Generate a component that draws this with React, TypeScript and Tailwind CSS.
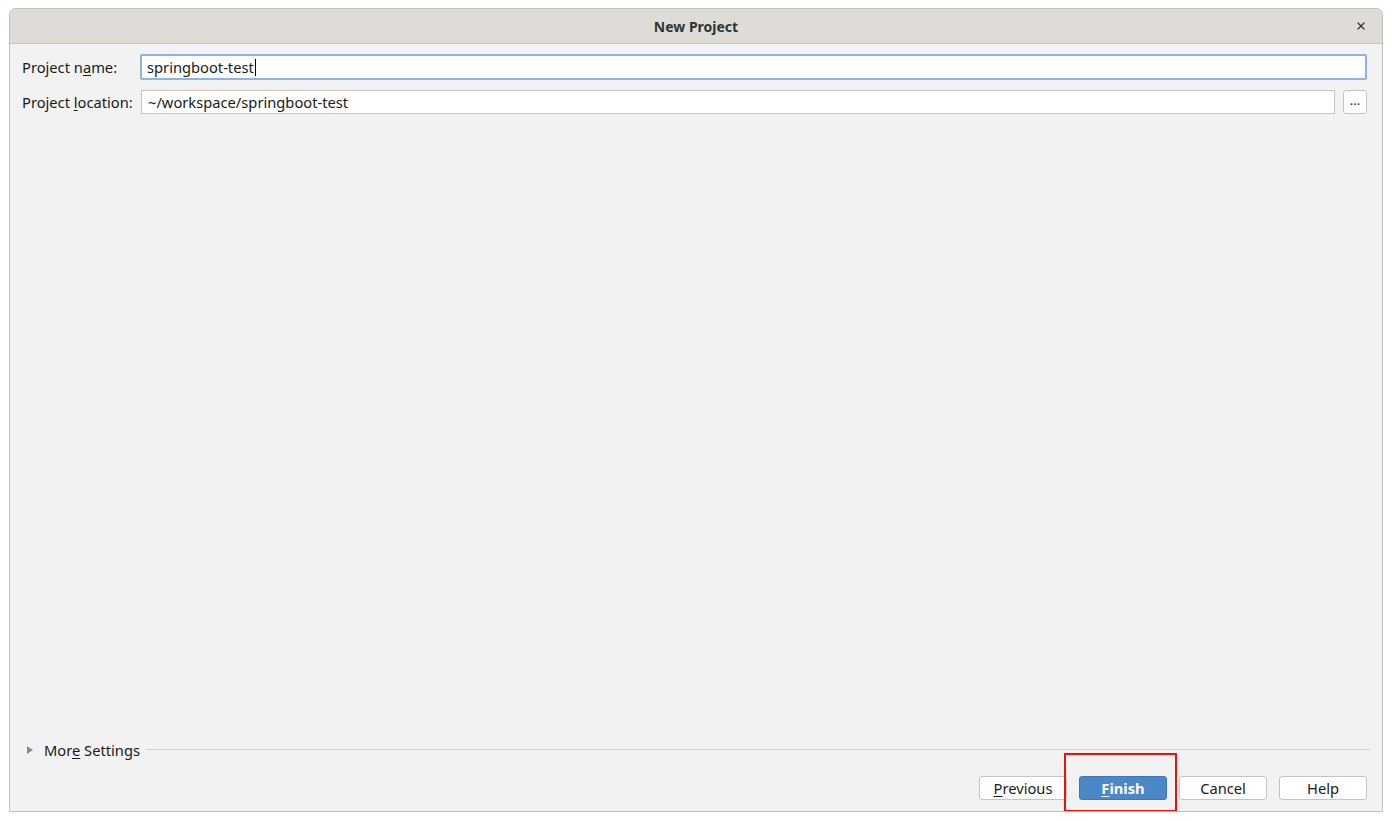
import { X } from "lucide-react";

const font = { fontFamily: '"Noto Sans", "Open Sans", sans-serif' };

function DialogButton({
  label,
  mnemonic,
  primary,
}: {
  label: string;
  mnemonic?: number;
  primary?: boolean;
}) {
  const chars =
    mnemonic === undefined ? (
      label
    ) : (
      <>
        {label.slice(0, mnemonic)}
        <span className="underline underline-offset-2">{label[mnemonic]}</span>
        {label.slice(mnemonic + 1)}
      </>
    );
  return (
    <button
      className={`flex h-[24px] w-[88px] items-center justify-center rounded-[3px] border text-[14.7px] leading-none ${
        primary
          ? "border-[#3f76b3] bg-[#4a88c7] font-bold text-white"
          : "border-[#c4c4c4] bg-white text-[#1a1a1a]"
      }`}
    >
      {chars}
    </button>
  );
}

export default function App() {
  return (
    <div className="h-[821px] w-[1392px] bg-white pt-[8px] pl-[9px]" style={font}>
      <div className="flex h-[804px] w-[1374px] flex-col overflow-hidden rounded-t-[7px] border border-[#c2c0bd] bg-[#f2f2f2]">
        <div className="relative flex h-[35px] shrink-0 items-center justify-center border-b border-[#c9c4be] bg-[#dfdcd8]">
          <span className="text-[14px] font-bold text-[#2e3436]">New Project</span>
          <X className="absolute right-[15px] h-[12px] w-[12px] text-[#2e3436]" strokeWidth={2.5} />
        </div>

        <div className="flex flex-col gap-[10px] pt-[10px] pr-[15px] pl-[12px]">
          <div className="flex items-center">
            <span className="w-[118px] text-[14.7px] text-[#1a1a1a]">
              Project n<span className="underline underline-offset-2">a</span>me:
            </span>
            <div className="flex h-[26px] flex-1 items-center rounded-[2px] border-2 border-[#8db3e4] bg-white pl-[5px] text-[14.7px] text-[#1a1a1a]">
              springboot-test
              <span className="ml-[1px] h-[17px] w-[1px] bg-black" />
            </div>
          </div>
          <div className="flex items-center">
            <span className="w-[119px] text-[14.7px] text-[#1a1a1a]">
              Project <span className="underline underline-offset-2">l</span>ocation:
            </span>
            <div className="flex h-[24px] flex-1 items-center border border-[#c4c4c4] bg-white pl-[6px] text-[14.7px] text-[#1a1a1a]">
              ~/workspace/springboot-test
            </div>
            <button className="ml-[8px] flex h-[24px] w-[24px] items-center justify-center rounded-[3px] border border-[#c4c4c4] bg-white pb-[4px] text-[13px] leading-none text-[#1a1a1a]">
              ...
            </button>
          </div>
        </div>

        <div className="flex-1" />

        <div className="flex items-center pr-[12px] pl-[17px]">
          <svg width="6" height="8" viewBox="0 0 6 8" className="mr-[11px]">
            <path d="M0 0 L6 4 L0 8 Z" fill="#8a8a8a" />
          </svg>
          <span className="text-[14.7px] text-[#1a1a1a]">
            Mor<span className="underline underline-offset-2">e</span> Settings
          </span>
          <div className="ml-[6px] h-px flex-1 bg-[#d0d0d0]" />
        </div>

        <div className="flex items-center justify-end gap-[12px] pt-[15px] pr-[15px] pb-[11px]">
          <DialogButton label="Previous" mnemonic={0} />
          <div className="relative">
            <DialogButton label="Finish" mnemonic={0} primary />
            <div className="pointer-events-none absolute -top-[23px] -right-[10px] -bottom-[12px] -left-[15px] border-2 border-[#e8120c]" />
          </div>
          <DialogButton label="Cancel" />
          <DialogButton label="Help" />
        </div>
      </div>
    </div>
  );
}
